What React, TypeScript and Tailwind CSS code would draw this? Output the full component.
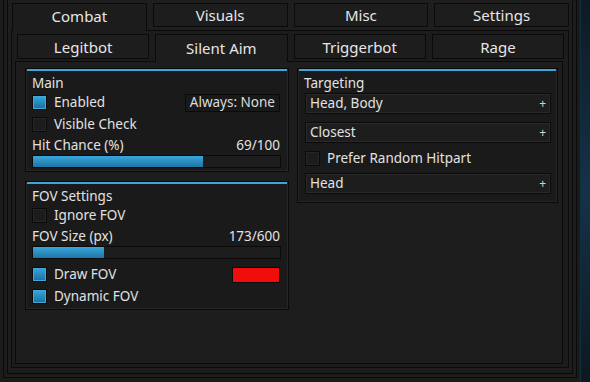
import React from "react";

const font = { fontFamily: '"Noto Sans", "Open Sans", sans-serif' };

const topTabs = ["Combat", "Visuals", "Misc", "Settings"];
const subTabs = ["Legitbot", "Silent Aim", "Triggerbot", "Rage"];

const Checkbox: React.FC<{ checked?: boolean }> = ({ checked }) => (
  <div className="w-[15px] h-[15px] border border-[#0a0a0a] shrink-0">
    <div
      className={`w-full h-full border ${
        checked
          ? "border-[#3fa9dd] bg-gradient-to-b from-[#33a3da] to-[#1d72a2]"
          : "border-[#262626] bg-[#1c1c1c]"
      }`}
    />
  </div>
);

const Toggle: React.FC<{ label: string; checked?: boolean; right?: React.ReactNode; className?: string }> = ({
  label,
  checked,
  right,
  className,
}) => (
  <div className={`h-[19px] flex items-center ${className ?? ""}`}>
    <Checkbox checked={checked} />
    <span className="ml-[7px] text-[13.5px] text-[#e2e2e2] leading-none">{label}</span>
    {right && <div className="ml-auto">{right}</div>}
  </div>
);

const Slider: React.FC<{ label: string; value: number; max: number; className?: string }> = ({
  label,
  value,
  max,
  className,
}) => (
  <div className={className}>
    <div className="h-[16px] flex items-center justify-between text-[13.5px] text-[#e2e2e2] leading-none">
      <span>{label}</span>
      <span className="mr-[1px]">
        {value}/{max}
      </span>
    </div>
    <div className="mt-[1px] h-[13px] border border-[#0a0a0a] bg-[#1d1d1d]">
      <div
        className="h-full bg-gradient-to-b from-[#3aa6dc] to-[#1d76a6]"
        style={{ width: `${(value / max) * 100}%` }}
      />
    </div>
  </div>
);

const Dropdown: React.FC<{ value: string; className?: string }> = ({ value, className }) => (
  <div className={`h-[21px] border border-[#0a0a0a] ${className ?? ""}`}>
    <div className="h-full border border-[#2a2a2a] bg-[#1d1d1d] flex items-center pl-[3px] pr-[3px]">
      <span className="text-[13.5px] text-[#e2e2e2] leading-none">{value}</span>
      <span className="ml-auto text-[12px] text-[#d0d0d0] leading-none">+</span>
    </div>
  </div>
);

const Groupbox: React.FC<{ title: string; children: React.ReactNode; className?: string }> = ({
  title,
  children,
  className,
}) => (
  <div className={`border border-[#0a0a0a] bg-[#1a1a1a] ${className ?? ""}`}>
    <div className="border border-[#262626] border-t-0 h-full flex flex-col">
      <div className="h-[2px] bg-[#3aa6dc]" />
      <div className="px-[5px] pb-[2px] flex-1">
        <div className="mt-[3px] h-[19px] flex items-center text-[13.5px] text-[#e2e2e2] leading-none">{title}</div>
        {children}
      </div>
    </div>
  </div>
);

export default function App() {
  return (
    <div className="w-[590px] h-[382px] bg-[#1b1b1b] flex overflow-hidden" style={font}>
      {/* window frame */}
      <div className="ml-[3px] w-[574px] h-[378px] border-x border-b border-[#0a0a0a] bg-[#1c1c1c] px-[3px] pb-[3px] flex flex-col">
        <div className="flex-1 border-x border-b border-[#0a0a0a] bg-[#1e1e1e] px-[3px] pb-[5px] flex flex-col shadow-[inset_0_-3px_0_0_#1b1b1b]">
          {/* main tabs */}
          <div className="h-[30px] pt-[3px] pl-[1px] flex gap-[6px]">
            {topTabs.map((t, i) => (
              <div
                key={t}
                className={`flex-1 border border-[#0a0a0a] flex items-center justify-center text-[15px] text-[#e6e6e6] leading-none ${
                  i === 0 ? "bg-[#1c1c1c] border-b-0 -mb-[1px] relative z-10" : "bg-[#1d1d1d] mb-[3px]"
                }`}
              >
                <span className={i === 0 ? "-mt-[2px]" : "mt-[1px]"}>{t}</span>
              </div>
            ))}
          </div>

          {/* tab content */}
          <div className="flex-1 border border-[#0a0a0a] bg-[#1c1c1c] px-[3px] pb-[3px] flex flex-col">
            <div className="h-[30px] pt-[3px] pl-[2px] pr-[1px] flex gap-[6px]">
              {subTabs.map((t, i) => (
                <div
                  key={t}
                  className={`flex-1 border border-[#0a0a0a] flex items-center justify-center text-[15px] text-[#e6e6e6] leading-none ${
                    i === 1 ? "bg-[#1d1d1d] border-b-0 -mb-[1px] relative z-10" : "bg-[#1d1d1d] mb-[2px]"
                  }`}
                >
                  <span className={i === 1 ? "-mt-[1px]" : "mt-[1px]"}>{t}</span>
                </div>
              ))}
            </div>

            <div className="flex-1 mr-[2px] border border-[#0a0a0a] bg-[#1d1d1d] pt-[6px] pl-[9px] pr-[4px] flex gap-[8px] items-start">
              {/* left column */}
              <div className="w-[264px] flex flex-col gap-[9px]">
                <Groupbox title="Main">
                  <Toggle
                    label="Enabled"
                    checked
                    right={
                      <div className="h-[18px] border border-[#0a0a0a] bg-[#191919] px-[4px] flex items-center text-[13.5px] text-[#dcdcdc] leading-none mr-[2px]">
                        Always: None
                      </div>
                    }
                  />
                  <Toggle label="Visible Check" className="mt-[3px]" />
                  <Slider label="Hit Chance (%)" value={69} max={100} className="mt-[4px] mr-[1px]" />
                </Groupbox>

                <Groupbox title="FOV Settings">
                  <Toggle label="Ignore FOV" />
                  <Slider label="FOV Size (px)" value={173} max={600} className="mt-[4px] mr-[1px]" />
                  <Toggle
                    label="Draw FOV"
                    checked
                    className="mt-[6px]"
                    right={<div className="w-[48px] h-[16px] border border-[#0a0a0a] bg-[#f20d0d] mr-[2px]" />}
                  />
                  <Toggle label="Dynamic FOV" checked className="mt-[3px]" />
                </Groupbox>
              </div>

              {/* right column */}
              <div className="flex-1">
                <Groupbox title="Targeting">
                  <Dropdown value="Head, Body" className="ml-[1px]" />
                  <Dropdown value="Closest" className="mt-[8px] ml-[1px]" />
                  <Toggle label="Prefer Random Hitpart" className="mt-[6px] ml-[1px]" />
                  <Dropdown value="Head" className="mt-[5px] mb-[5px] ml-[1px]" />
                </Groupbox>
              </div>
            </div>
          </div>
        </div>
      </div>
      {/* outside of window */}
      <div className="ml-[3px] flex-1 border-l border-[#10303f] bg-gradient-to-b from-[#0e1a24] via-[#15324a] to-[#0d1820]" />
    </div>
  );
}
